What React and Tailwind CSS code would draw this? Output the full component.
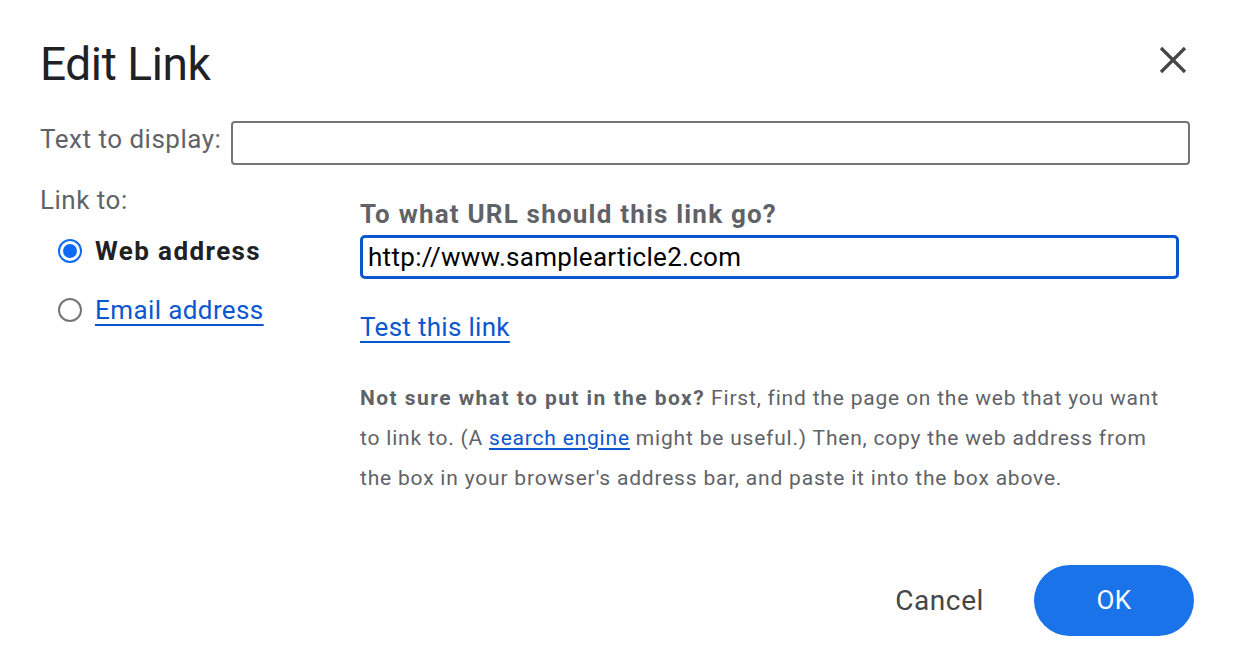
import { useState } from 'react';

const Radio = ({ checked }) => (
  <span className={`flex h-[24px] w-[24px] shrink-0 items-center justify-center rounded-full border-2 ${checked ? 'border-[#0b6bf5]' : 'border-[#757575]'}`}>
    {checked && <span className="h-[14px] w-[14px] rounded-full bg-[#0b6bf5]" />}
  </span>
);

const App = () => {
  const [url, setUrl] = useState('http://www.samplearticle2.com');

  return (
    <div className="min-h-[662px] w-[1240px] bg-white font-['Roboto',sans-serif] text-[#5f6368]">
      {/* Header */}
      <div className="flex items-start justify-between pl-[40px] pr-[53px] pt-[36px]">
        <h1 className="text-[46px] leading-[56px] font-normal tracking-[-0.4px] text-[#202124]">Edit Link</h1>
        <button className="mt-[10px] flex h-[28px] w-[28px] items-center justify-center text-[#444746]">
          <svg width="28" height="28" viewBox="0 0 28 28" fill="none" stroke="currentColor" strokeWidth="3.2">
            <path d="M2 2L26 26M26 2L2 26" />
          </svg>
        </button>
      </div>

      {/* Text to display */}
      <div className="mt-[29px] flex items-start gap-[10px] pl-[40px] pr-[50px]">
        <label className="mt-[2px] whitespace-nowrap text-[26px] leading-[32px] tracking-[0.5px]">Text to display:</label>
        <input className="h-[44px] flex-1 rounded-[4px] border-2 border-[#757575] px-2 text-[26px] outline-none" />
      </div>

      {/* Link to */}
      <div className="mt-[19px] flex pl-[40px] pr-[61px]">
        <div className="w-[320px] shrink-0">
          <div className="text-[26px] leading-[32px] tracking-[0.5px]">Link to:</div>
          <div className="mt-[19px] flex flex-col gap-[27px] pl-[18px]">
            <label className="flex h-[32px] items-center gap-[13px] text-[26px] font-bold tracking-[1.4px] text-[#202124]">
              <Radio checked />
              Web address
            </label>
            <label className="flex h-[32px] items-center gap-[13px] text-[26px] tracking-[0.4px]">
              <Radio />
              <a href="#" className="text-[#0b57d0] underline decoration-[2px] underline-offset-[5px]">Email address</a>
            </label>
          </div>
        </div>

        <div className="flex-1">
          <div className="mt-[14px] text-[26px] font-bold leading-[32px] tracking-[1.2px]">To what URL should this link go?</div>
          <input
            value={url}
            onChange={(e) => setUrl(e.target.value)}
            className="mt-[5px] h-[44px] w-full rounded-[5px] border-[3px] border-[#0b57d0] px-[5px] text-[26px] tracking-[0.3px] text-black outline-none"
          />
          <a href="#" className="mt-[32px] block w-fit text-[26px] leading-[32px] tracking-[0.3px] text-[#0b57d0] underline decoration-[2px] underline-offset-[5px]">
            Test this link
          </a>
          <p className="mt-[35px] whitespace-nowrap text-[21px] leading-[40px] tracking-[0.8px]">
            <span className="font-bold tracking-[1.45px]">Not sure what to put in the box?</span> First, find the page on the web that you want
            <br />
            to link to. (A <a href="#" className="text-[#0b57d0] underline underline-offset-[3px]">search engine</a> might be useful.) Then, copy the web address from
            <br />
            the box in your browser's address bar, and paste it into the box above.
          </p>
        </div>
      </div>

      {/* Footer */}
      <div className="mt-[67px] flex items-center justify-end gap-[50px] pr-[46px]">
        <button className="text-[28px] tracking-[0.6px] text-[#444746]">Cancel</button>
        <button className="h-[71px] w-[160px] rounded-full bg-[#1a73e8] text-[26px] tracking-[0.5px] text-white">OK</button>
      </div>
    </div>
  );
};

export default App;
